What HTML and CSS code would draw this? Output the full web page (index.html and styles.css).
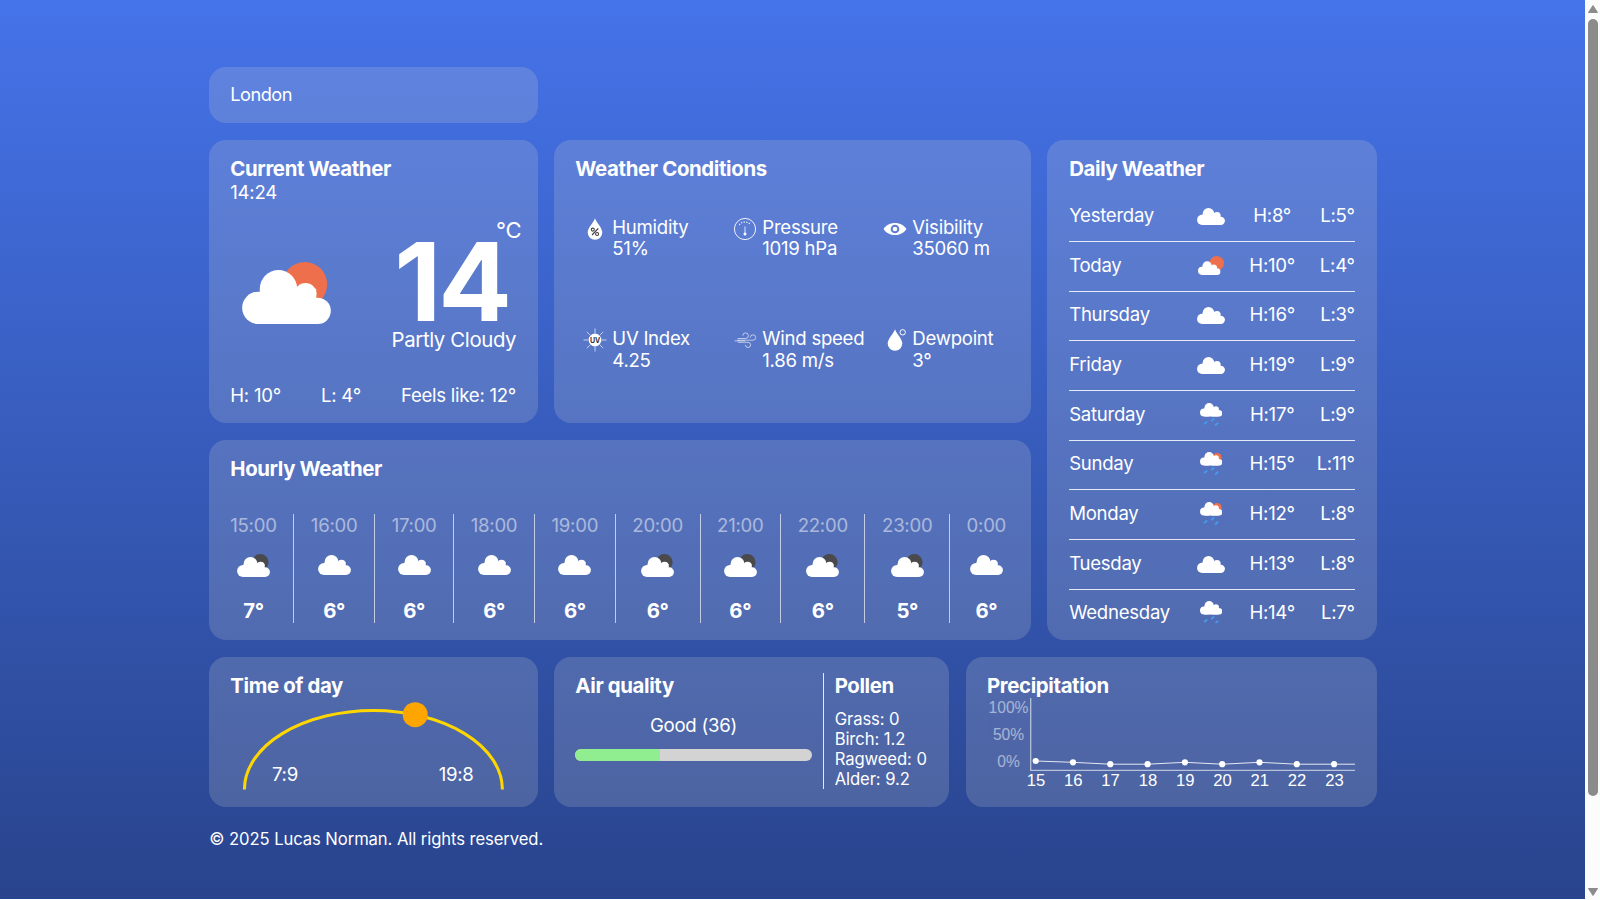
FILE: index.html
```html
<!DOCTYPE html>
<html lang="en">
<head>
<meta charset="utf-8">
<title>Weather</title>
<link rel="stylesheet" href="styles.css">
</head>
<body>
<svg class="defs" width="0" height="0">
  <defs>
    <g id="cloud" fill="#fff">
      <rect x="126" y="725" width="140" height="97" rx="48.5"/>
      <rect x="240" y="743" width="152" height="79" rx="39.5"/>
      <circle cx="235" cy="716" r="56"/>
      <circle cx="316" cy="732" r="33"/>
      <path d="M179 716H348V822H179Z"/>
    </g>
    <symbol id="cloudy" viewBox="126 660 266 162"><use href="#cloud"/></symbol>
    <symbol id="partly" viewBox="126 636 266 186"><circle cx="314" cy="703" r="67" fill="#ee6f4c"/><use href="#cloud"/></symbol>
    <symbol id="night" viewBox="126 636 266 186"><circle cx="314" cy="703" r="67" fill="#4a4a4c"/><use href="#cloud"/></symbol>
    <symbol id="today" viewBox="0 0 78 57"><circle cx="56" cy="22" r="22" fill="#ee6f4c"/><use href="#cloud" transform="translate(-31.7 -150.3) scale(.252)"/></symbol>
    <g id="drops" stroke="#459cec" stroke-width="5.500" stroke-linecap="round">
      <path d="M14 62l6-5M35 53l6-5M47 66l6-5"/>
    </g>
    <symbol id="rain" viewBox="0 0 67 70"><use href="#cloud" transform="translate(-31.7 -166.3) scale(.252)"/><use href="#drops"/></symbol>
    <symbol id="sunrain" viewBox="0 0 67 70"><circle cx="51" cy="17" r="14" fill="#ee6f4c"/><use href="#cloud" transform="translate(-31.7 -166.3) scale(.252)"/><use href="#drops"/></symbol>
  </defs>
</svg>
<div class="window">
  <main class="page">
    <div class="dashboard">
      <div class="card search">London</div>

      <section class="card current">
        <h2>Current Weather</h2>
        <p class="clock">14:24</p>
        <div class="now">
          <svg class="now-icon"><use href="#partly"/></svg>
          <div class="reading">
            <div class="unit">°C</div>
            <div class="temp">14</div>
            <div class="desc">Partly Cloudy</div>
          </div>
        </div>
        <div class="range"><span>H: 10°</span><span>L: 4°</span><span>Feels like: 12°</span></div>
      </section>

      <section class="card conditions">
        <h2>Weather Conditions</h2>
        <div class="cond-grid">
          <div class="cond">
            <svg viewBox="0 0 24 24"><path d="M12 1.2C13.500 6 19.300 10.500 19.300 15.500A7.300 7.300 0 0 1 4.700 15.500C4.700 10.500 10.500 6 12 1.200Z" fill="#fff"/><g fill="none" stroke="#444" stroke-width="1.100"><circle cx="9.800" cy="12.600" r="1.500"/><circle cx="14.100" cy="17" r="1.500"/><path d="M15.200 11.500L9 18"/></g></svg>
            <div>Humidity<br>51%</div>
          </div>
          <div class="cond">
            <svg viewBox="0 0 24 24" fill="none" stroke="#fff"><circle cx="12" cy="12" r="10.600" stroke-width=".9"/><path d="M12 9.500V16" stroke-width=".8"/><circle cx="12" cy="17" r="1.500" fill="#fff" stroke="none"/><path d="M6.300 7.800A7.200 7.200 0 0 1 17.700 7.800" stroke-width="1.200" stroke-dasharray="1.200 1.400"/></svg>
            <div>Pressure<br>1019 hPa</div>
          </div>
          <div class="cond">
            <svg viewBox="0 0 24 24"><path d="M.6 12C5.500 4 18.500 4 23.400 12C18.500 20 5.500 20 .6 12ZM12 7.700A4.300 4.300 0 1 0 12 16.300A4.300 4.300 0 1 0 12 7.700Z" fill="#fff" fill-rule="evenodd"/><circle cx="12" cy="12" r="2.300" fill="#fff"/></svg>
            <div>Visibility<br>35060 m</div>
          </div>
          <div class="cond">
            <svg viewBox="0 0 24 24"><g stroke="#fff" stroke-opacity=".65" stroke-width="1"><path d="M12 .5V5M12 19V23.500M.5 12H5M19 12H23.500M3.800 3.800L7 7M17 17L20.200 20.200M3.800 20.200L7 17M17 7L20.200 3.800"/></g><circle cx="12" cy="12" r="6.400" fill="#fff"/><text x="12" y="14.500" class="uv">UV</text></svg>
            <div>UV Index<br>4.25</div>
          </div>
          <div class="cond">
            <svg viewBox="0 0 24 24" fill="none" stroke="#fff" stroke-opacity=".6" stroke-width="1"><path d="M4.500 10.500H12.500A2.800 2.800 0 1 0 9.800 7.700M4 12.200H20A2.700 2.700 0 1 0 17.300 9.500M1.500 12.900H12M5 14.300H15A2.600 2.600 0 1 1 12.400 16.900"/></svg>
            <div>Wind speed<br>1.86 m/s</div>
          </div>
          <div class="cond">
            <svg viewBox="0 0 24 24"><path d="M12 1.200C13.500 6 19.300 10.500 19.300 15.500A7.300 7.300 0 0 1 4.700 15.500C4.700 10.500 10.500 6 12 1.200Z" fill="#fff"/><circle cx="19.700" cy="4.300" r="2.700" fill="none" stroke="#fff"/></svg>
            <div>Dewpoint<br>3°</div>
          </div>
        </div>
      </section>

      <section class="card daily">
        <h2>Daily Weather</h2>
        <div class="days">
          <div class="day"><span>Yesterday</span><svg class="d-cloud"><use href="#cloudy"/></svg><span class="hi">H:8°</span><span class="lo">L:5°</span></div>
          <div class="day"><span>Today</span><svg class="d-today"><use href="#today"/></svg><span class="hi">H:10°</span><span class="lo">L:4°</span></div>
          <div class="day"><span>Thursday</span><svg class="d-cloud"><use href="#cloudy"/></svg><span class="hi">H:16°</span><span class="lo">L:3°</span></div>
          <div class="day"><span>Friday</span><svg class="d-cloud"><use href="#cloudy"/></svg><span class="hi">H:19°</span><span class="lo">L:9°</span></div>
          <div class="day"><span>Saturday</span><svg class="d-rain"><use href="#rain"/></svg><span class="hi">H:17°</span><span class="lo">L:9°</span></div>
          <div class="day"><span>Sunday</span><svg class="d-rain"><use href="#sunrain"/></svg><span class="hi">H:15°</span><span class="lo">L:11°</span></div>
          <div class="day"><span>Monday</span><svg class="d-rain"><use href="#sunrain"/></svg><span class="hi">H:12°</span><span class="lo">L:8°</span></div>
          <div class="day"><span>Tuesday</span><svg class="d-cloud"><use href="#cloudy"/></svg><span class="hi">H:13°</span><span class="lo">L:8°</span></div>
          <div class="day"><span>Wednesday</span><svg class="d-rain"><use href="#rain"/></svg><span class="hi">H:14°</span><span class="lo">L:7°</span></div>
        </div>
      </section>

      <section class="card hourly">
        <h2>Hourly Weather</h2>
        <div class="hours">
          <div class="hour"><span>15:00</span><svg class="h-night"><use href="#night"/></svg><b>7°</b></div>
          <div class="hour"><span>16:00</span><svg><use href="#cloudy"/></svg><b>6°</b></div>
          <div class="hour"><span>17:00</span><svg><use href="#cloudy"/></svg><b>6°</b></div>
          <div class="hour"><span>18:00</span><svg><use href="#cloudy"/></svg><b>6°</b></div>
          <div class="hour"><span>19:00</span><svg><use href="#cloudy"/></svg><b>6°</b></div>
          <div class="hour"><span>20:00</span><svg class="h-night"><use href="#night"/></svg><b>6°</b></div>
          <div class="hour"><span>21:00</span><svg class="h-night"><use href="#night"/></svg><b>6°</b></div>
          <div class="hour"><span>22:00</span><svg class="h-night"><use href="#night"/></svg><b>6°</b></div>
          <div class="hour"><span>23:00</span><svg class="h-night"><use href="#night"/></svg><b>5°</b></div>
          <div class="hour"><span>0:00</span><svg><use href="#cloudy"/></svg><b>6°</b></div>
        </div>
      </section>

      <div class="bottom">
        <section class="card sun">
          <h2>Time of day</h2>
          <svg class="arc" viewBox="230.300 698 287 92">
            <path d="M244.700 789.500A129 79 0 0 1 502.700 789.500" fill="none" stroke="#ffd700" stroke-width="3"/>
            <circle cx="415.500" cy="714.700" r="12.500" fill="#ffa500"/>
            <text x="272.300" y="781">7:9</text>
            <text x="439" y="781">19:8</text>
          </svg>
        </section>
        <section class="card air">
          <div class="aqi">
            <h2>Air quality</h2>
            <p>Good (36)</p>
            <div class="bar"><div class="fill" style="width:36%"></div></div>
          </div>
          <div class="pollen">
            <h2>Pollen</h2>
            <ul><li>Grass: 0</li><li>Birch: 1.2</li><li>Ragweed: 0</li><li>Alder: 9.2</li></ul>
          </div>
        </section>
        <section class="card precip">
          <h2>Precipitation</h2>
          <svg class="chart" viewBox="987 698 368 92">
            <g class="ylab"><text x="1008.500" y="712.700">100%</text><text x="1008.500" y="739.700">50%</text><text x="1008.500" y="766.700">0%</text></g>
            <path d="M1030.700 698V770.300H1355" class="axis"/>
            <path d="M1035.700 761L1073 762.300L1110.300 764.200H1147.600L1184.900 762.300L1222.200 764.200L1259.500 762.300L1296.800 764.200H1355" class="line"/>
            <g fill="#fff"><circle cx="1035.700" cy="761" r="3.100"/><circle cx="1073" cy="762.300" r="3.100"/><circle cx="1110.300" cy="764.200" r="3.100"/><circle cx="1147.600" cy="764.200" r="3.100"/><circle cx="1184.900" cy="762.300" r="3.100"/><circle cx="1222.200" cy="764.200" r="3.100"/><circle cx="1259.500" cy="762.300" r="3.100"/><circle cx="1296.800" cy="764.200" r="3.100"/><circle cx="1334.100" cy="764.200" r="3.100"/></g>
            <g class="xlab"><text x="1036" y="786">15</text><text x="1073.300" y="786">16</text><text x="1110.600" y="786">17</text><text x="1147.900" y="786">18</text><text x="1185.200" y="786">19</text><text x="1222.500" y="786">20</text><text x="1259.800" y="786">21</text><text x="1297.100" y="786">22</text><text x="1334.400" y="786">23</text></g>
          </svg>
        </section>
      </div>
    </div>
    <footer>© 2025 Lucas Norman. All rights reserved.</footer>
  </main>
  <div class="scrollbar">
    <svg width="15" height="900" fill="#8b8b8b"><path d="M3.500 12.500L8 5.500L12.500 12.500Z" stroke="#8b8b8b" stroke-linejoin="round"/><rect x="3" y="19" width="10" height="777" rx="5"/><path d="M3.500 888.500L8 895.500L12.500 888.500Z" stroke="#8b8b8b" stroke-linejoin="round"/></svg>
  </div>
</div>
</body>
</html>
```
FILE: styles.css
```css
* { box-sizing: border-box; }
body, h2, p, ul { margin: 0; padding: 0; }
body { font-family: Inter, sans-serif; font-size: 18.6px; letter-spacing: -.27px; color: #fff; height: 900px; overflow: hidden; }
svg { display: block; flex: none; }
.defs { position: absolute; }
.window { display: flex; height: 900px; }
.page { flex: 1; height: 899px; padding: 67px 0 0 209.3px; background: linear-gradient(#4573e9, #29448d); }
.scrollbar { width: 15px; background: #fcfcfc; }

.dashboard { display: grid; width: 1167.3px; grid-template-columns: 328.4px 476.2px 329.4px; grid-template-rows: 56.300px 283.400px 200px 150px; gap: 16.650px; }
.card { background: rgba(211, 211, 211, .2); border-radius: 17px; padding: 16.400px 21px; overflow: hidden; }
h2 { font-size: 20.4px; line-height: 25px; font-weight: 700; letter-spacing: -.37px; white-space: nowrap; }

.search { display: flex; align-items: center; font-size: 18.2px; letter-spacing: -.5px; padding-top: 14.500px; grid-column: 1; }
.current { grid-row: 2; display: flex; flex-direction: column; }
.clock { line-height: 22.600px; }
.now { display: flex; justify-content: space-between; }
.now-icon { width: 89px; height: 62px; margin: 58.500px 0 0 11.300px; }
.reading { width: 130px; margin-top: 13.900px; text-align: center; white-space: nowrap; }
.unit { font-size: 22px; line-height: 25px; text-align: right; margin-right: -4.500px; }
.temp { font-size: 109px; line-height: 80px; font-weight: 700; letter-spacing: -3px; margin-top: -1.500px; }
.desc { font-size: 20.4px; letter-spacing: -.38px; line-height: 26px; margin: 6px .500px 0 0; text-align: right; }
.range { display: flex; justify-content: space-between; margin: 30.800px .700px 0 0; line-height: 23px; }

.conditions { grid-row: 2; grid-column: 2; }
.cond-grid { display: grid; grid-template-columns: repeat(3, 150px); grid-auto-rows: 111.800px; margin: 35.300px 0 0 7.800px; }
.cond { display: flex; gap: 5.200px; line-height: 21.700px; white-space: nowrap; }
.cond svg { width: 24px; height: 24px; }
.uv { font: 700 7px Inter, sans-serif; fill: #333; text-anchor: middle; }

.daily { grid-row: 2 / 4; grid-column: 3; padding-left: 22px; padding-right: 21.800px; }
.days { height: 431px; margin-top: 10.900px; overflow: hidden; }
.day { display: grid; grid-template-columns: 114px 56px 66px 1fr; align-items: center; height: 49.680px; padding-bottom: 3.200px; border-bottom: 1px solid rgba(255, 255, 255, .85); }
.day:last-child { border-bottom-color: transparent; }
.day svg { justify-self: center; }
.d-cloud { width: 28px; height: 17px; margin-top: 3.200px; }
.d-today { width: 26px; height: 19px; margin-top: 2px; }
.d-rain { width: 22.300px; height: 23.300px; margin-top: 1.500px; }
.hi { text-align: center; }
.lo { text-align: right; }

.hourly { grid-row: 3; grid-column: 1 / 3; }
.hours { display: flex; margin-top: 33px; height: 108.500px; }
.hour { display: flex; flex-direction: column; align-items: center; padding: 0 16.620px; border-right: 1px solid rgba(255, 255, 255, .65); }
.hour:first-child { padding-left: 0; }
.hour:last-child { border: 0; }
.hour span { opacity: .5; line-height: 23.600px; }
.hour svg { width: 33px; height: 20px; margin: 17.500px 0 23.500px; }
.hour .h-night { height: 23px; margin: 16px 0 22px; }
.hour b { font-size: 20.4px; letter-spacing: -.37px; line-height: 24px; }

.bottom { grid-row: 4; grid-column: 1 / 4; display: grid; grid-template-columns: 328.400px 395px 1fr; gap: 16.650px; }
.bottom .card { padding-top: 16.800px; }
.arc { width: 287px; height: 92px; }
.arc text { font: 18.600px Inter, sans-serif; fill: #fff; }
.air { display: flex; padding-right: 10px; }
.aqi { width: 248.300px; height: 116px; padding-right: 11px; border-right: 1px solid rgba(255, 255, 255, .85); }
.aqi p { text-align: center; margin: 14.800px 0 11.300px; line-height: 24px; }
.bar { height: 12px; border-radius: 6px; background: #d3d3d3; overflow: hidden; }
.fill { height: 100%; background: #90ee90; }
.pollen { padding-left: 11px; }
.pollen ul { list-style: none; font-size: 16.640px; letter-spacing: -.08px; line-height: 20px; margin-top: 11px; white-space: nowrap; }
.chart { width: 368px; height: 92px; letter-spacing: 0; }
.chart text { font: 16.640px "Liberation Sans", Arial, sans-serif; text-anchor: middle; fill: #fff; }
.chart .ylab text { font-size: 15.600px; }
.ylab { opacity: .5; }
.axis { fill: none; stroke: #fff; stroke-opacity: .6; stroke-width: 1.300; }
.line { fill: none; stroke: #fff; stroke-opacity: .85; stroke-width: 1; }
footer { font-size: 16.640px; letter-spacing: -.08px; line-height: 20px; margin-top: 22.300px; }
```
